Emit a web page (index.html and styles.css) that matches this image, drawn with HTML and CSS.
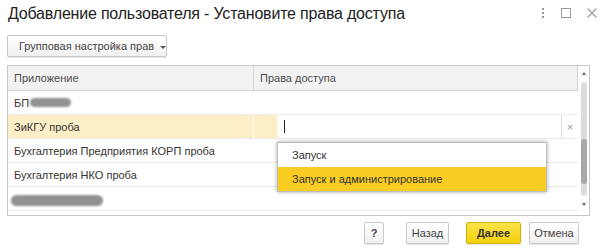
FILE: index.html
```html
<!DOCTYPE html>
<html lang="ru">
<head>
    <meta charset="UTF-8">
    <title>Добавление пользователя</title>
    <link rel="stylesheet" href="styles.css">
</head>
<body>
    <div class="dialog">
        <div class="titlebar">
            <h1 class="title">Добавление пользователя - Установите права доступа</h1>
            <div class="win-controls">
                <svg width="4" height="10" viewBox="0 0 4 10"><rect x="1" y="0" width="2" height="2" fill="#999"/><rect x="1" y="4" width="2" height="2" fill="#999"/><rect x="1" y="8" width="2" height="2" fill="#999"/></svg>
                <svg width="10" height="10" viewBox="0 0 10 10"><rect x="0.5" y="0.5" width="9" height="9" fill="none" stroke="#999"/></svg>
                <svg width="10" height="10" viewBox="0 0 10 10"><path d="M0.5 0.5 L9.5 9.5 M9.5 0.5 L0.5 9.5" stroke="#999" stroke-width="1.1"/></svg>
            </div>
        </div>

        <div class="toolbar">
            <button class="btn btn-menu">Групповая настройка прав <span class="caret"></span></button>
        </div>

        <div class="grid">
            <div class="grid-main">
                <div class="grid-head">
                    <div class="cell c1">Приложение</div>
                    <div class="cell c2">Права доступа</div>
                </div>
                <div class="grid-row">
                    <div class="cell c1">БП <span class="smudge smudge-short"></span></div>
                    <div class="cell c2"></div>
                </div>
                <div class="grid-row current">
                    <div class="cell c1">ЗиКГУ проба</div>
                    <div class="cell c2 editing">
                        <span class="pad"></span>
                        <div class="edit-box"><span class="text-cursor"></span></div>
                        <span class="clear">×</span>
                    </div>
                </div>
                <div class="grid-row">
                    <div class="cell c1">Бухгалтерия Предприятия КОРП проба</div>
                    <div class="cell c2"></div>
                </div>
                <div class="grid-row">
                    <div class="cell c1">Бухгалтерия НКО проба</div>
                    <div class="cell c2"></div>
                </div>
                <div class="grid-row">
                    <div class="cell c1"><span class="smudge smudge-long"></span></div>
                    <div class="cell c2"></div>
                </div>
            </div>
            <div class="scrollbar">
                <span class="arrow up"></span>
                <div class="track"><div class="thumb"></div></div>
                <span class="arrow down"></span>
            </div>

            <div class="dropdown">
                <div class="option">Запуск</div>
                <div class="option selected">Запуск и администрирование</div>
            </div>
        </div>

        <div class="footer">
            <button class="btn btn-help">?</button>
            <button class="btn btn-back">Назад</button>
            <button class="btn btn-default">Далее</button>
            <button class="btn btn-cancel">Отмена</button>
        </div>
    </div>
</body>
</html>
```

FILE: styles.css
```css
body {
    margin: 0;
    background: #fff;
    font-family: "Liberation Sans", Arial, sans-serif;
    color: #333;
}
.dialog {
    width: 600px;
    height: 250px;
    overflow: hidden;
}
.titlebar {
    height: 30px;
    display: flex;
    align-items: center;
    justify-content: space-between;
    padding: 0 3px 0 8px;
}
.title {
    margin: 0;
    font-size: 16px;
    letter-spacing: -0.2px;
    font-weight: normal;
    color: #222;
    margin-top: -2px;
}
.win-controls {
    display: flex;
    align-items: center;
    gap: 16px;
    margin-top: -4px;
}
.toolbar {
    padding: 5px 0 0 7px;
    height: 30px;
}
.btn {
    font-family: "Liberation Sans", Arial, sans-serif;
    font-size: 11px;
    color: #444;
    height: 22px;
    padding: 0 8px;
    border: 1px solid #c8c8c8;
    border-radius: 2px;
    background: linear-gradient(#ffffff, #f0f0f0);
    box-shadow: 0 1px 1px rgba(0, 0, 0, 0.1);
    white-space: nowrap;
    cursor: pointer;
}
.btn-menu {
    width: 160px;
    text-align: left;
    padding-left: 11px;
}
.caret {
    display: inline-block;
    margin-left: 3px;
    vertical-align: middle;
    border-left: 3px solid transparent;
    border-right: 3px solid transparent;
    border-top: 3px solid #555;
}
.grid {
    position: relative;
    margin-left: 7px;
    width: 581px;
    height: 149px;
    border: 1px solid #c8c8c8;
    display: flex;
    font-size: 11px;
}
.grid-main {
    width: 570px;
}
.grid-head {
    display: flex;
    height: 24px;
    background: #f2f2f2;
    border-bottom: 1px solid #d4d4d4;
    border-right: 1px solid #d4d4d4;
    width: 569px;
    color: #4d4d4d;
}
.grid-row {
    display: flex;
    height: 23px;
    border-bottom: 1px solid #ececec;
}
.cell {
    display: flex;
    align-items: center;
}
.c1 {
    width: 239px;
    padding-left: 6px;
}
.c2 {
    flex: 1;
    padding-left: 6px;
    border-left: 1px solid #fff;
}
.grid-head .c2 {
    border-left: 1px solid #d4d4d4;
}
.grid-row.current .c1 {
    background: #fcefc8;
}
.editing {
    padding-left: 0;
}
.editing .pad {
    width: 23px;
    align-self: stretch;
    background: #fcefc8;
}
.edit-box {
    flex: 1;
    align-self: stretch;
    background: #fff;
    border-right: 1px solid #dcdcdc;
    display: flex;
    align-items: center;
    padding-left: 7px;
}
.text-cursor {
    width: 1px;
    height: 13px;
    background: #222;
}
.clear {
    width: 16px;
    text-align: center;
    color: #999;
    font-size: 11px;
}
.smudge {
    display: inline-block;
    background: #7d7d7d;
    border-radius: 6px;
    filter: blur(1.2px);
    opacity: 0.85;
}
.smudge-short {
    width: 41px;
    height: 9px;
    margin-left: 1px;
}
.smudge-long {
    width: 92px;
    height: 11px;
    margin-left: -3px;
    margin-top: 4px;
}
.scrollbar {
    width: 11px;
    display: flex;
    flex-direction: column;
    align-items: center;
}
.arrow {
    width: 0;
    height: 0;
    border-left: 2.5px solid transparent;
    border-right: 2.5px solid transparent;
}
.arrow.up {
    margin-top: 6px;
    border-bottom: 3px solid #666;
}
.arrow.down {
    margin-top: 7px;
    border-top: 3px solid #666;
}
.track {
    margin-top: 7px;
    width: 6px;
    height: 114px;
    background: #dcdcdc;
    border-radius: 3px;
    display: flex;
    flex-direction: column;
    justify-content: flex-end;
    padding-bottom: 12px;
    box-sizing: border-box;
}
.thumb {
    height: 45px;
    background: #a8a8a8;
    border-radius: 3px;
}
.dropdown {
    position: absolute;
    left: 269px;
    top: 76px;
    width: 268px;
    background: #fff;
    border: 1px solid #bdbdbd;
    box-shadow: 0 0 4px rgba(0, 0, 0, 0.35);
}
.option {
    height: 24px;
    line-height: 24px;
    padding-left: 14px;
    color: #333;
}
.option.selected {
    background: #f9cd22;
}
.footer {
    display: flex;
    justify-content: flex-end;
    padding: 6px 21px 0 0;
}
.btn-help {
    width: 20px;
    padding: 0;
    margin-right: 22px;
    font-weight: bold;
}
.btn-back {
    width: 43px;
    padding: 0;
    margin-right: 17px;
}
.btn-default {
    width: 55px;
    padding: 0;
    margin-right: 8px;
    background: linear-gradient(#fbe34a, #f3d10b);
    border-color: #d4b300;
    color: #333;
    font-weight: bold;
}
.btn-cancel {
    width: 50px;
    padding: 0;
}
```
